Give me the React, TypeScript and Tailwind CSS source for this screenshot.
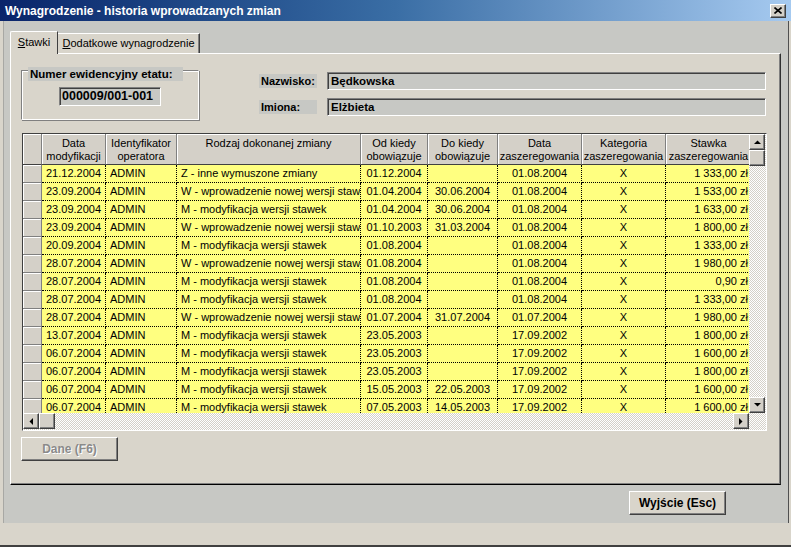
import React from 'react'

const sunken =
  'border border-t-[#808080] border-l-[#808080] border-b-white border-r-white shadow-[inset_1px_1px_0_#404040]'
const raised =
  'border border-t-white border-l-white border-b-[#404040] border-r-[#404040] shadow-[inset_-1px_-1px_0_#808080]'
const dither = 'bg-[repeating-conic-gradient(#d4d0c8_0%_25%,#ffffff_0%_50%)] bg-[length:2px_2px]'

type Col = { w: string; head: string[]; align: string }

const cols: Col[] = [
  { w: 'w-[64px]', head: ['Data', 'modyfikacji'], align: 'text-left pl-[4px]' },
  { w: 'w-[71px]', head: ['Identyfikator', 'operatora'], align: 'text-left pl-[4px]' },
  { w: 'w-[184px]', head: ['Rodzaj dokonanej zmiany'], align: 'text-left pl-[4px]' },
  { w: 'w-[67px]', head: ['Od kiedy', 'obowiązuje'], align: 'text-center' },
  { w: 'w-[70px]', head: ['Do kiedy', 'obowiązuje'], align: 'text-center' },
  { w: 'w-[84px]', head: ['Data', 'zaszeregowania'], align: 'text-center' },
  { w: 'w-[84px]', head: ['Kategoria', 'zaszeregowania'], align: 'text-center' },
  { w: 'w-[86px]', head: ['Stawka', 'zaszeregowania'], align: 'text-right pr-[3px]' },
]

const W = 'W - wprowadzenie nowej wersji stawek'
const M = 'M - modyfikacja wersji stawek'

const rows: string[][] = [
  ['21.12.2004', 'ADMIN', 'Z - inne wymuszone zmiany', '01.12.2004', '', '01.08.2004', 'X', '1 333,00 zł'],
  ['23.09.2004', 'ADMIN', W, '01.04.2004', '30.06.2004', '01.08.2004', 'X', '1 533,00 zł'],
  ['23.09.2004', 'ADMIN', M, '01.04.2004', '30.06.2004', '01.08.2004', 'X', '1 633,00 zł'],
  ['23.09.2004', 'ADMIN', W, '01.10.2003', '31.03.2004', '01.08.2004', 'X', '1 800,00 zł'],
  ['20.09.2004', 'ADMIN', M, '01.08.2004', '', '01.08.2004', 'X', '1 333,00 zł'],
  ['28.07.2004', 'ADMIN', W, '01.08.2004', '', '01.08.2004', 'X', '1 980,00 zł'],
  ['28.07.2004', 'ADMIN', M, '01.08.2004', '', '01.08.2004', 'X', '0,90 zł'],
  ['28.07.2004', 'ADMIN', M, '01.08.2004', '', '01.08.2004', 'X', '1 333,00 zł'],
  ['28.07.2004', 'ADMIN', W, '01.07.2004', '31.07.2004', '01.07.2004', 'X', '1 980,00 zł'],
  ['13.07.2004', 'ADMIN', M, '23.05.2003', '', '17.09.2002', 'X', '1 800,00 zł'],
  ['06.07.2004', 'ADMIN', M, '23.05.2003', '', '17.09.2002', 'X', '1 600,00 zł'],
  ['06.07.2004', 'ADMIN', M, '23.05.2003', '', '17.09.2002', 'X', '1 800,00 zł'],
  ['06.07.2004', 'ADMIN', M, '15.05.2003', '22.05.2003', '17.09.2002', 'X', '1 600,00 zł'],
  ['06.07.2004', 'ADMIN', M, '07.05.2003', '14.05.2003', '17.09.2002', 'X', '1 600,00 zł'],
]

function Arrow({ dir }: { dir: 'up' | 'down' | 'left' | 'right' }) {
  const pts = {
    up: '0,4 7,4 3.5,0.5',
    down: '0,0 7,0 3.5,3.5',
    left: '4,0 4,7 0.5,3.5',
    right: '0,0 0,7 3.5,3.5',
  }[dir]
  const size = dir === 'up' || dir === 'down' ? { width: 7, height: 4 } : { width: 4, height: 7 }
  return (
    <svg {...size} viewBox={`0 0 ${size.width} ${size.height}`}>
      <polygon points={pts} fill="#000" />
    </svg>
  )
}

function ScrollBtn({ dir }: { dir: 'up' | 'down' | 'left' | 'right' }) {
  return (
    <div className={`w-[16px] h-[16px] shrink-0 bg-[#d4d0c8] flex items-center justify-center ${raised}`}>
      <Arrow dir={dir} />
    </div>
  )
}

function Grid() {
  return (
    <div className="ml-[11px] w-[745px] h-[298px] border border-t-[#404040] border-l-[#404040] border-b-white border-r-white bg-[#d4d0c8]">
      <div className="flex h-[279px]">
        <div className="w-[726px] h-[279px] overflow-hidden">
          <div className="flex h-[31px]">
            <div className="w-[19px] shrink-0 bg-[#d4d0c8] border-r border-b border-r-[#808080] border-b-[#404040] shadow-[inset_1px_1px_0_#fff]" />
            {cols.map((c, i) => (
              <div
                key={i}
                className={`${c.w} shrink-0 bg-[#d4d0c8] border-r border-b border-r-[#808080] border-b-[#404040] shadow-[inset_1px_1px_0_#fff] text-center leading-[13px] pt-[3px] whitespace-nowrap overflow-hidden`}
              >
                {c.head.map((h, j) => (
                  <div key={j}>{h}</div>
                ))}
              </div>
            ))}
          </div>
          {rows.map((r, i) => (
            <div key={i} className="flex h-[18px]">
              <div className="w-[19px] shrink-0 bg-[#d4d0c8] border-r border-b border-[#808080] shadow-[inset_1px_1px_0_#fff]" />
              {r.map((v, j) => (
                <div
                  key={j}
                  className={`${cols[j].w} ${cols[j].align} shrink-0 bg-[#ffff80] border-r border-b border-dotted border-black leading-[17px] whitespace-nowrap overflow-hidden`}
                >
                  {v}
                </div>
              ))}
            </div>
          ))}
        </div>
        <div className="w-[16px] flex flex-col">
          <ScrollBtn dir="up" />
          <div className={`h-[16px] bg-[#d4d0c8] ${raised}`} />
          <div className={`flex-1 ${dither}`} />
          <ScrollBtn dir="down" />
        </div>
        <div className={`flex-1 ${dither}`} />
      </div>
      <div className={`flex h-[17px] ${dither}`}>
        <div className="flex w-[726px] h-[16px]">
          <ScrollBtn dir="left" />
          <div className={`w-[16px] h-[16px] bg-[#d4d0c8] ${raised}`} />
          <div className="flex-1" />
          <ScrollBtn dir="right" />
        </div>
      </div>
    </div>
  )
}

export default function App() {
  return (
    <div className="w-[791px] h-[547px] flex flex-col bg-[#d9d5cb] border-b-2 border-b-[#404040] font-['Liberation_Sans',Arial,sans-serif] text-[11px] text-black overflow-hidden">
      {/* title bar */}
      <div className="h-[21px] shrink-0 flex items-center justify-between pl-[5px] pr-[5px] bg-gradient-to-r from-[#0a246a] via-[#3a6ea5] to-[#a6caf0]">
        <span className="text-white font-bold text-[12px] whitespace-nowrap">
          Wynagrodzenie - historia wprowadzanych zmian
        </span>
        <div className={`w-[16px] h-[14px] bg-[#d4d0c8] flex items-center justify-center ${raised}`}>
          <svg width="8" height="7" viewBox="0 0 8 7">
            <path d="M0.5 0.5 L7.5 6.5 M7.5 0.5 L0.5 6.5" stroke="#000" strokeWidth="1.6" />
          </svg>
        </div>
      </div>

      {/* client */}
      <div className="ml-[3px] mr-[2px] h-[502px] shrink-0 bg-[#c7c8c4] border-l border-l-[#a8a8a4] border-r border-r-[#505050] pt-[10px] pl-[6px] flex flex-col">
        {/* tabs */}
        <div className="flex items-end h-[22px]">
          <div className="relative z-10 -mb-[1px] w-[48px] h-[23px] bg-[#d9d5cb] border-t border-l border-r border-t-white border-l-white border-r-[#404040] rounded-tl-[2px] flex items-center justify-center pb-[2px]">
            <span>
              <span className="underline">S</span>tawki
            </span>
          </div>
          <div className="w-[142px] h-[20px] bg-[#d9d5cb] border-t border-r border-t-white border-r-[#404040] shadow-[inset_-1px_0_0_#808080] flex items-center justify-center">
            <span>
              <span className="underline">D</span>odatkowe wynagrodzenie
            </span>
          </div>
        </div>

        {/* tab panel */}
        <div className="w-[771px] h-[432px] bg-[#d9d5cb] border border-t-white border-l-white border-r-[#303030] border-b-black shadow-[inset_-1px_-1px_0_#808080] flex flex-col">
          <div className="h-[79px] flex">
            {/* group box */}
            <div className="pt-[12px] pl-[10px]">
              <div className="relative mt-[4px] w-[178px] h-[50px] border border-t-[#808080] border-l-[#808080] border-b-white border-r-white shadow-[inset_1px_1px_0_#fff,1px_1px_0_#808080] pt-[16px] pl-[37px]">
                <div className="absolute -top-[4px] left-[6px] w-[155px] h-[14px] bg-[#c7c8c4] pl-[2px] font-bold text-[11.5px] leading-[14px] whitespace-nowrap">
                  Numer ewidencyjny etatu:
                </div>
                <div className={`w-[102px] h-[19px] bg-[#c7c8c4] ${sunken} pl-[2px] font-bold text-[12.5px] leading-[17px]`}>
                  000009/001-001
                </div>
              </div>
            </div>
            {/* name fields */}
            <div className="ml-[60px] pt-[18px] flex flex-col gap-[8px]">
              <div className="flex items-center">
                <div className="w-[58px] h-[14px] bg-[#c7c8c4] pl-[2px] font-bold leading-[14px]">Nazwisko:</div>
                <div className={`ml-[10px] w-[439px] h-[18px] bg-[#c7c8c4] ${sunken} pl-[3px] font-bold text-[11.5px] leading-[16px]`}>
                  Będkowska
                </div>
              </div>
              <div className="flex items-center">
                <div className="w-[58px] h-[14px] bg-[#c7c8c4] pl-[2px] font-bold leading-[14px]">Imiona:</div>
                <div className={`ml-[10px] w-[439px] h-[18px] bg-[#c7c8c4] ${sunken} pl-[3px] font-bold text-[11.5px] leading-[16px]`}>
                  Elżbieta
                </div>
              </div>
            </div>
          </div>

          <Grid />

          <div className="mt-[6px] ml-[10px]">
            <div className={`w-[97px] h-[24px] bg-[#d9d5cb] ${raised} flex items-center justify-center font-bold text-[12px] text-[#8a8a8a] [text-shadow:1px_1px_0_#fff]`}>
              Dane (F6)
            </div>
          </div>
        </div>

        {/* bottom button */}
        <div className="flex justify-end pr-[62px] mt-[6px]">
          <div className={`w-[97px] h-[24px] bg-[#d9d5cb] ${raised} flex items-center justify-center font-bold text-[12px]`}>
            Wyjście (Esc)
          </div>
        </div>
      </div>
      <div className="flex-1" />
    </div>
  )
}
